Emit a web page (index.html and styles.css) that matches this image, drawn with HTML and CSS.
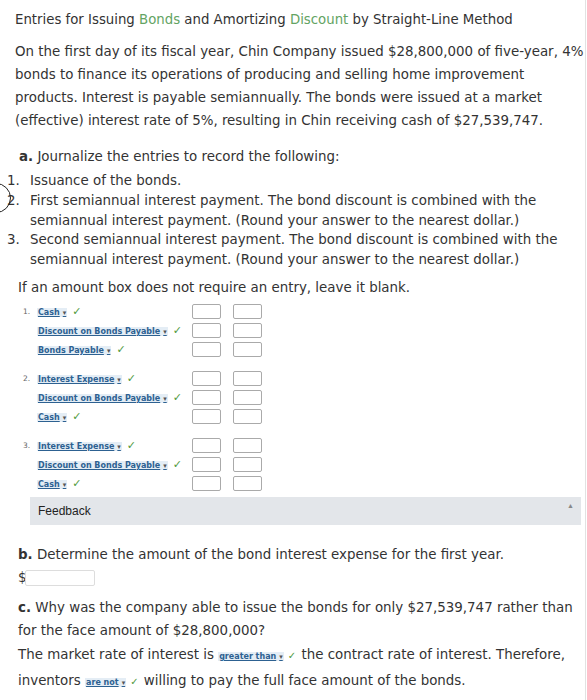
FILE: index.html
```html
<!DOCTYPE html>
<html>
<head>
<meta charset="utf-8">
<link rel="stylesheet" href="styles.css">
</head>
<body>
<div class="page">
  <div class="ring"></div>
  <h1 class="title">Entries for Issuing <span class="term">Bonds</span> and Amortizing <span class="term">Discount</span> by Straight-Line Method</h1>
  <p class="intro">On the first day of its fiscal year, Chin Company issued $28,800,000 of five-year, 4% bonds to finance its operations of producing and selling home improvement products. Interest is payable semiannually. The bonds were issued at a market (effective) interest rate of 5%, resulting in Chin receiving cash of $27,539,747.</p>

  <p class="part"><b>a.</b> Journalize the entries to record the following:</p>
  <ol class="steps">
    <li><span>Issuance of the bonds.</span></li>
    <li><span>First semiannual interest payment. The bond discount is combined with the semiannual interest payment. (Round your answer to the nearest dollar.)</span></li>
    <li><span>Second semiannual interest payment. The bond discount is combined with the semiannual interest payment. (Round your answer to the nearest dollar.)</span></li>
  </ol>
  <p class="note">If an amount box does not require an entry, leave it blank.</p>

  <div class="journal">
    <div class="entry">
      <span class="num">1.</span><span class="acct"><span class="sel">Cash<span class="arr">▾</span></span><span class="ok">✓</span></span><span class="box"></span><span class="box"></span>
      <span class="num"></span><span class="acct"><span class="sel">Discount on Bonds Payable<span class="arr">▾</span></span><span class="ok">✓</span></span><span class="box"></span><span class="box"></span>
      <span class="num"></span><span class="acct"><span class="sel">Bonds Payable<span class="arr">▾</span></span><span class="ok">✓</span></span><span class="box"></span><span class="box"></span>
    </div>
    <div class="entry">
      <span class="num">2.</span><span class="acct"><span class="sel">Interest Expense<span class="arr">▾</span></span><span class="ok">✓</span></span><span class="box"></span><span class="box"></span>
      <span class="num"></span><span class="acct"><span class="sel">Discount on Bonds Payable<span class="arr">▾</span></span><span class="ok">✓</span></span><span class="box"></span><span class="box"></span>
      <span class="num"></span><span class="acct"><span class="sel">Cash<span class="arr">▾</span></span><span class="ok">✓</span></span><span class="box"></span><span class="box"></span>
    </div>
    <div class="entry">
      <span class="num">3.</span><span class="acct"><span class="sel">Interest Expense<span class="arr">▾</span></span><span class="ok">✓</span></span><span class="box"></span><span class="box"></span>
      <span class="num"></span><span class="acct"><span class="sel">Discount on Bonds Payable<span class="arr">▾</span></span><span class="ok">✓</span></span><span class="box"></span><span class="box"></span>
      <span class="num"></span><span class="acct"><span class="sel">Cash<span class="arr">▾</span></span><span class="ok">✓</span></span><span class="box"></span><span class="box"></span>
    </div>
  </div>

  <div class="feedback"><span>Feedback</span><span class="caret">▲</span></div>

  <p class="part partb"><b>b.</b> Determine the amount of the bond interest expense for the first year.</p>
  <div class="dollar"><span>$</span><span class="field"></span></div>

  <p class="partc"><b>c.</b> Why was the company able to issue the bonds for only $27,539,747 rather than for the face amount of $28,800,000?<br>The market rate of interest is <span class="sel small">greater than<span class="arr">▾</span></span><span class="ok">✓</span> the contract rate of interest. Therefore, inventors <span class="sel small">are not<span class="arr">▾</span></span><span class="ok">✓</span> willing to pay the full face amount of the bonds.</p>
</div>
</body>
</html>
```
FILE: styles.css
```css
html, body { margin: 0; padding: 0; background: #fff; }
body { font-family: "DejaVu Sans", Verdana, sans-serif; color: #333; }
.page {
  position: relative;
  width: 586px;
  min-height: 700px;
  border-right: 1px solid #e2e2e2;
  box-sizing: border-box;
  padding: 10px 0 0 15px;
  overflow: hidden;
}
.ring {
  position: absolute;
  left: -19px;
  top: 183px;
  width: 28px;
  height: 28px;
  border: 1.5px solid #222;
  border-radius: 50%;
}
.title { font-size: 13.3px; font-weight: normal; margin: 0 0 10px; line-height: 20px; }
.term { color: #63a463; }
.intro { font-size: 13.4px; line-height: 23px; margin: 0 0 15px; }
.part { font-size: 13.4px; line-height: 20px; margin: 0 0 4px 4px; }
.steps {
  font-size: 13.4px;
  line-height: 19.75px;
  margin: 0 0 8px -8px;
  padding: 0;
  list-style: none;
  counter-reset: step;
}
.steps li {
  counter-increment: step;
  display: grid;
  grid-template-columns: 23px 1fr;
}
.steps li::before { content: counter(step) "."; }
.note { font-size: 13.4px; line-height: 20px; margin: 0 0 4px 3px; }
.journal { margin-left: 8px; font-size: 8px; }
.entry {
  display: grid;
  grid-template-columns: 14px 155px 30px 30px;
  grid-auto-rows: 19px;
  align-items: center;
  margin-bottom: 10px;
}
.entry:last-child { margin-bottom: 4px; }
.entry .box:nth-child(4n) { margin-left: 11px; }
.acct { white-space: nowrap; }
.num { color: #666; font-size: 7.5px; }
.sel {
  font-weight: bold;
  color: #2d6191;
  text-decoration: underline;
  background: #e4edf5;
  padding: 0 1px;
  white-space: nowrap;
}
.arr { font-size: 7px; margin-left: 3px; color: #555; }
.ok { color: #4f9a3c; margin-left: 5px; font-size: 11px; line-height: 1; }
.box {
  width: 29px;
  height: 15px;
  border: 1px solid #aaa;
  border-radius: 2px;
  box-sizing: border-box;
}
.feedback {
  margin: 0 4px 0 15px;
  height: 28px;
  background: #e3e6ea;
  display: flex;
  align-items: center;
  justify-content: space-between;
  padding: 0 7px 0 8px;
  font-family: "Liberation Sans", Arial, sans-serif;
  font-size: 12px;
  color: #222;
}
.caret { font-size: 7px; color: #888; align-self: flex-start; margin-top: 5px; }
.partb { margin: 20px 0 4px 3px; line-height: 20px; }
.dollar { font-size: 13.4px; margin-left: 3px; display: flex; align-items: center; height: 18px; }
.field {
  display: inline-block;
  width: 70px;
  height: 16px;
  border: 1px solid #ddd;
  border-radius: 2px;
  margin-left: -2px;
  box-sizing: border-box;
}
.partc { font-size: 13.4px; line-height: 23.5px; margin: 9px 0 0 3px; }
.sel.small { font-size: 8px; }
.partc .ok { font-size: 10px; margin-left: 4px; margin-right: 1px; }
```
